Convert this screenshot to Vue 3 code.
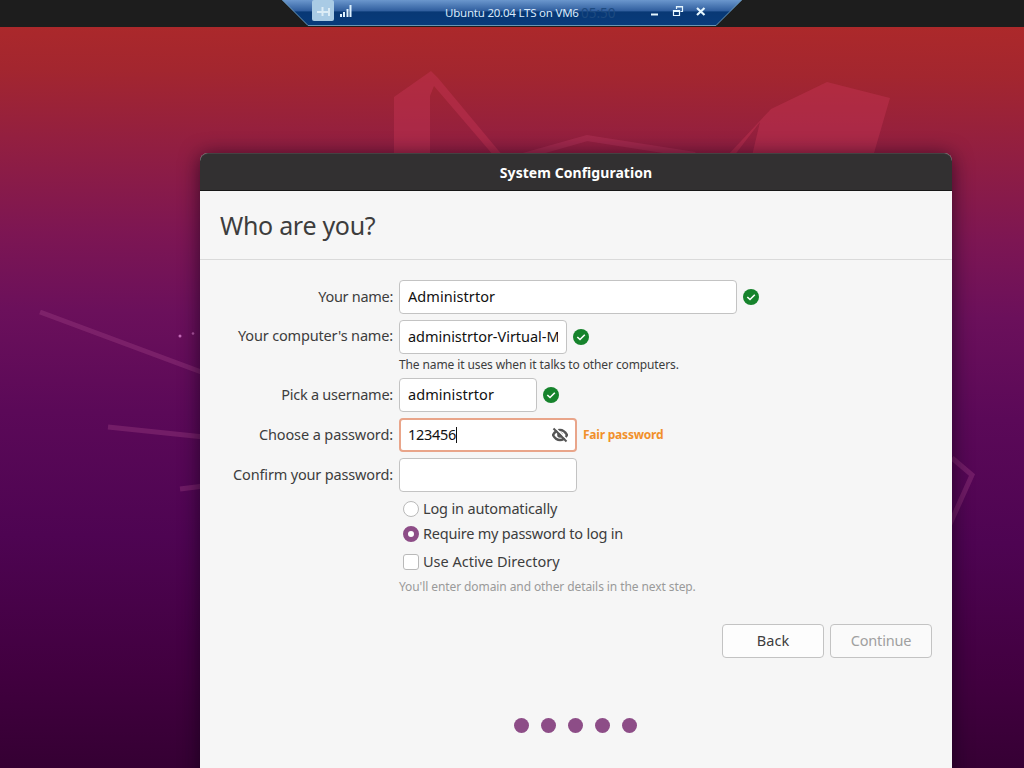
<script setup>
import { reactive } from "vue";

const form = reactive({
  name: "Administrtor",
  computer: "administrtor-Virtual-Machine",
  username: "administrtor",
  password: "123456",
  confirm: "",
  login: "password",
  activeDirectory: false
});

const steps = 5;
</script>

<template>
  <div class="desktop">
    <svg class="wallpaper" viewBox="0 0 1024 768" fill="none">
      <path class="shape" d="M394 97L431 71L438 78L503 156H494L434 86L430 96V156H394Z" />
      <path class="shape" d="M771 109L827 82L890 98L872 160H751L760 122L734 156H727Z" />
      <path class="line" d="M520 157L587 138L695 155" />
      <path class="line dim" d="M40 312L204 373M108 427L204 437M180 489L204 486M952 458L972 475L950 524" />
      <circle cx="180" cy="336" r="1.5" fill="#c56bb8" />
      <circle cx="193" cy="333.500" r="1.300" fill="#b257a3" />
    </svg>

    <header class="topbar">
      <div class="vm-bar">
        <svg class="vm-shape" viewBox="0 0 460 27">
          <defs>
            <linearGradient id="vmFill" x1="0" y1="0" x2="0" y2="1">
              <stop offset="0" stop-color="#6b97cd" />
              <stop offset="0.42" stop-color="#315f9f" />
              <stop offset="0.47" stop-color="#083875" />
              <stop offset="1" stop-color="#083b7b" />
            </linearGradient>
          </defs>
          <path d="M0 0H460L434 25.500H26Z" fill="url(#vmFill)" />
          <path d="M0.500 0L26 25.500H434L459.500 0" fill="none" stroke="#6896b5" />
        </svg>
        <div class="vm-content">
          <span class="pin">
            <svg width="22" height="21" viewBox="0 0 22 21"><path d="M5 12H10M10.500 7V16M11 12H17M17 8V16" stroke="#dcecf6" stroke-width="2" fill="none" /></svg>
          </span>
          <svg class="signal" width="12" height="13" viewBox="0 0 12 13"><path d="M1 13V10M4 13V8M7.500 13V5M10.500 13V1" stroke="#dff2ff" stroke-width="2" /></svg>
          <span class="vm-title">Ubuntu 20.04 LTS on VM6</span>
          <span class="clock">05:50</span>
          <svg class="controls" width="58" height="14" viewBox="0 0 58 14" fill="none" stroke="#e5f6ff">
            <path d="M1 10.500H8" stroke-width="2" />
            <path d="M23.500 6.500H29.500V11.500H23.500ZM23 7.500H30M26.500 5V2.500H32.500V7.500H30.500M26 3H33" stroke-width="1.200" />
            <path d="M47 4L54.500 11M54.500 4L47 11" stroke-width="2.200" />
          </svg>
        </div>
      </div>
    </header>

    <main class="window">
      <div class="titlebar">System Configuration</div>
      <h1>Who are you?</h1>

      <form @submit.prevent>
        <div class="row">
          <label for="name" class="l-name">Your name:</label>
          <input id="name" v-model="form.name" class="w-name" type="text" />
          <svg class="check" viewBox="0 0 16 16"><circle cx="8" cy="8" r="8" /><path d="M4.300 8L7 10.500L11.800 5.700" /></svg>
        </div>
        <div class="row">
          <label for="computer" class="l-computer">Your computer's name:</label>
          <input id="computer" v-model="form.computer" class="w-computer" type="text" />
          <svg class="check" viewBox="0 0 16 16"><circle cx="8" cy="8" r="8" /><path d="M4.300 8L7 10.500L11.800 5.700" /></svg>
        </div>
        <p class="hint">The name it uses when it talks to other computers.</p>
        <div class="row">
          <label for="username" class="l-username">Pick a username:</label>
          <input id="username" v-model="form.username" class="w-user" type="text" />
          <svg class="check" viewBox="0 0 16 16"><circle cx="8" cy="8" r="8" /><path d="M4.300 8L7 10.500L11.800 5.700" /></svg>
        </div>
        <div class="row">
          <label for="password" class="l-password">Choose a password:</label>
          <div class="password">
            <input id="password" v-model="form.password" class="active" type="text" />
            <i class="caret"></i>
            <!-- crossed-out eye: hide password -->
            <svg class="eye" viewBox="0 0 16 16">
              <path d="M1 8C3 4.500 5 3 8 3S13 4.500 15 8C13 11.500 11 13 8 13S3 11.500 1 8Z" fill="none" stroke="#555" stroke-width="2.400" />
              <circle cx="8" cy="8" r="2.800" fill="#555" />
              <path d="M3 0.500L15.500 13" stroke="#fff" stroke-width="1.600" />
              <path d="M1.500 1.500L14.500 14.500" stroke="#555" stroke-width="2" />
            </svg>
          </div>
          <strong>Fair password</strong>
        </div>
        <div class="row">
          <label for="confirm" class="l-confirm">Confirm your password:</label>
          <input id="confirm" v-model="form.confirm" class="w-confirm" type="text" />
        </div>

        <div class="options">
          <label class="o-auto"><input v-model="form.login" type="radio" value="auto" /><span>Log in automatically</span></label>
          <label class="o-require"><input v-model="form.login" type="radio" value="password" /><span>Require my password to log in</span></label>
          <label class="o-directory"><input v-model="form.activeDirectory" type="checkbox" /><span>Use Active Directory</span></label>
          <p>You'll enter domain and other details in the next step.</p>
        </div>

        <div class="buttons">
          <button type="button">Back</button>
          <button type="submit" disabled>Continue</button>
        </div>
      </form>

      <div class="steps">
        <i v-for="n in steps" :key="n"></i>
      </div>
    </main>
  </div>
</template>

<style>
body {
  margin: 0;
  overflow: hidden;
}
</style>

<style scoped>
* {
  box-sizing: border-box;
}
.desktop {
  position: relative;
  width: 1024px;
  height: 768px;
  overflow: hidden;
  font-family: "Noto Sans", sans-serif;
  font-size: 14.5px;
  color: #3d3d3d;
  background: linear-gradient(180.5deg, #ad292a 3%, #a3262f 10%, #931f40 19%, #7d1653 31%, #6b105b 41%, #5b0958 54%, #4e0452 70%, #41003f 88%, #350033);
}
.wallpaper {
  position: absolute;
  inset: 0;
}
.shape {
  fill: #c63554;
  opacity: 0.44;
}
.line {
  stroke: #bd3b61;
  stroke-width: 6;
  opacity: 0.36;
}
.dim {
  stroke: #a14386;
  stroke-width: 5;
}
.topbar {
  position: relative;
  display: flex;
  height: 27px;
  background: #1d1d1d;
}
.vm-bar {
  position: relative;
  width: 460px;
  height: 27px;
  margin-left: 282px;
}
.vm-shape {
  position: absolute;
  inset: 0;
}
.vm-content {
  position: relative;
  display: flex;
  align-items: flex-start;
  padding-left: 30px;
  color: #d8e9fb;
}
.pin {
  width: 22px;
  height: 21px;
  border-radius: 2px;
  background: #a9cbe5;
}
.signal {
  margin: 4px 0 0 6px;
}
.vm-title {
  width: 136px;
  margin: 4px 0 0 93px;
  font: 11.5px/18px "Noto Sans", sans-serif;
  letter-spacing: -0.22px;
  white-space: nowrap;
}
.clock {
  width: 36px;
  margin-top: 4px;
  font-size: 13.5px;
  line-height: 18px;
  color: #1d4a80;
}
.controls {
  margin: 4px 0 0 33px;
}
.window {
  position: relative;
  width: 752px;
  height: 630px;
  margin: 126px 0 0 200px;
  border-radius: 8px 8px 0 0;
  background: #f6f6f6;
  box-shadow: 0 2px 20px rgba(12, 0, 18, 0.65);
}
.titlebar {
  height: 38px;
  border-top: 1px solid #454142;
  border-bottom: 1px solid #171717;
  border-radius: 8px 8px 0 0;
  background: #323031;
  color: #fff;
  font-weight: bold;
  font-size: 14px;
  line-height: 38px;
  letter-spacing: 0.05px;
  text-align: center;
}
h1 {
  height: 69px;
  margin: 0;
  padding-left: 20px;
  border-bottom: 1px solid #dadada;
  font-size: 25px;
  font-weight: normal;
  line-height: 69px;
  letter-spacing: -0.3px;
}
form {
  display: flex;
  flex-direction: column;
  padding: 20px 20px 0 0;
}
.row {
  display: flex;
  align-items: center;
  height: 34px;
  margin-bottom: 6px;
}
.row label {
  width: 193px;
  margin-right: 6px;
  padding-bottom: 2px;
  text-align: right;
  white-space: nowrap;
  letter-spacing: -0.16px;
}
.row .l-name {
  letter-spacing: -0.3px;
}
.row .l-computer {
  padding-bottom: 4px;
}
.row .l-username {
  letter-spacing: -0.24px;
}
.row .l-password {
  letter-spacing: -0.11px;
}
input[type="text"] {
  height: 34px;
  padding: 0 8px 2px;
  border: 1px solid #c3c3c3;
  border-radius: 4px;
  outline: none;
  background: #fff;
  font: inherit;
  letter-spacing: 0.06px;
  color: #111;
}
.w-name {
  width: 338px;
}
input[type="text"].w-computer {
  width: 168px;
  letter-spacing: -0.03px;
}
.w-user {
  width: 138px;
}
.w-confirm,
.active {
  width: 178px;
}
input[type="text"].active {
  border: 2px solid #e9a58a;
  padding: 0 7px 2px;
  letter-spacing: -0.3px;
}
.check {
  width: 16px;
  height: 16px;
  margin-left: 6px;
}
.check circle {
  fill: #16832c;
}
.check path {
  fill: none;
  stroke: #fff;
  stroke-width: 1.6;
}
.hint {
  height: 24px;
  margin: -6px 0 0 199px;
  font-size: 12px;
  line-height: 22px;
  letter-spacing: -0.11px;
}
.password {
  position: relative;
  display: flex;
}
.caret {
  position: absolute;
  left: 57px;
  top: 9px;
  width: 1px;
  height: 16px;
  background: #111;
}
.eye {
  position: absolute;
  right: 9px;
  top: 9px;
  width: 16px;
  height: 16px;
}
strong {
  margin-left: 6px;
  padding-bottom: 2px;
  font-size: 12px;
  letter-spacing: -0.22px;
  color: #f1902b;
}
.options {
  display: flex;
  flex-direction: column;
  height: 128px;
  margin: -2px 0 0 203px;
}
.options label {
  display: flex;
  align-items: center;
  height: 25px;
  gap: 4px;
}
.options span {
  padding-bottom: 2px;
}
.options .o-auto {
  letter-spacing: -0.15px;
}
.options .o-require {
  letter-spacing: -0.22px;
}
.options .o-directory {
  margin-top: 3px;
}
.options input {
  appearance: none;
  width: 16px;
  height: 16px;
  margin: 0;
  border: 1px solid #b9b9b9;
  border-radius: 3px;
  background: #fff;
}
.options input[type="radio"] {
  border-radius: 50%;
}
.options input:checked {
  border: 5.5px solid #8d4d87;
}
.options p {
  margin: 2px 0 0 -4px;
  font-size: 12px;
  line-height: 22px;
  letter-spacing: -0.09px;
  color: #9a9a9a;
}
.buttons {
  display: flex;
  justify-content: flex-end;
  gap: 6px;
}
button {
  width: 102px;
  height: 34px;
  padding: 0 0 2px;
  border: 1px solid #c3c3c3;
  border-radius: 4px;
  background: #fdfdfd;
  font: inherit;
  color: #3d3d3d;
}
button:disabled {
  background: #fafafa;
  color: #a0a0a0;
  letter-spacing: -0.2px;
}
.steps {
  display: flex;
  gap: 12px;
  justify-content: center;
  margin: 60px 2px 0 0;
}
.steps i {
  width: 15px;
  height: 15px;
  border-radius: 50%;
  background: #8d4d87;
}
</style>
